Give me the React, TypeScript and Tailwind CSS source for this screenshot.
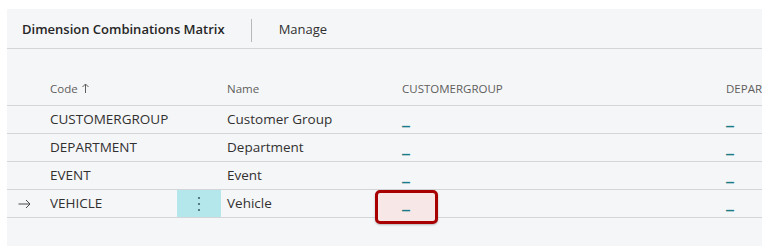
import React from "react";

const font = { fontFamily: '"Open Sans", "Noto Sans", sans-serif' };

interface Row {
  code: string;
  name: string;
  current?: boolean;
}

const rows: Row[] = [
  { code: "CUSTOMERGROUP", name: "Customer Group" },
  { code: "DEPARTMENT", name: "Department" },
  { code: "EVENT", name: "Event" },
  { code: "VEHICLE", name: "Vehicle", current: true },
];

// matrix cell value, shown as a link-coloured underscore
function Dash() {
  return (
    <span className="relative top-[-1px] font-['DejaVu_Sans',sans-serif] text-[16px] font-bold text-[#1a7c86]">
      _
    </span>
  );
}

function MenuDots() {
  return (
    <svg width="4" height="16" viewBox="0 0 4 16" className="text-[#3f6468]">
      <circle cx="2" cy="2" r="1.1" fill="currentColor" />
      <circle cx="2" cy="8" r="1.1" fill="currentColor" />
      <circle cx="2" cy="14" r="1.1" fill="currentColor" />
    </svg>
  );
}

function ArrowRight() {
  return (
    <svg width="13" height="10" viewBox="0 0 13 10" fill="none" stroke="#4a4a4a" strokeWidth="1">
      <path d="M0.5 5H12M8 1l4 4-4 4" />
    </svg>
  );
}

export default function App() {
  return (
    <div className="h-[246px] w-[762px] overflow-hidden bg-white pl-[7px] pt-[9px]" style={font}>
      <div className="h-full overflow-hidden bg-[#f5f6f8] text-[#323130]">
        {/* action bar */}
        <div className="flex h-[40px] items-center border-b border-[#d4d5d8] pt-[3px]">
          <span className="pl-[15px] text-[13px] font-semibold text-[#262626]">
            Dimension Combinations Matrix
          </span>
          <span className="ml-[26px] h-[23px] w-px bg-[#b8b8b8]" />
          <span className="ml-[27px] text-[13px] text-[#323130]">Manage</span>
        </div>

        {/* column headers */}
        <div className="flex h-[57px] items-end border-b border-[#d4d5d8] pb-[8px] text-[11.5px] text-[#605e5c] whitespace-nowrap">
          <div className="w-[43px] shrink-0" />
          <div className="flex w-[171px] shrink-0 items-center gap-[4px]">
            Code
            <svg width="7" height="10" viewBox="0 0 7 10" fill="none" stroke="#605e5c" strokeWidth="1">
              <path d="M3.5 10V1M0.5 4l3-3 3 3" />
            </svg>
          </div>
          <div className="w-[154px] shrink-0 pl-[6px]">Name</div>
          <div className="w-[324px] shrink-0 pl-[27px]">CUSTOMERGROUP</div>
          <div className="shrink-0 pl-[27px]">DEPARTMENT</div>
        </div>

        {/* rows */}
        {rows.map((r) => (
          <div key={r.code} className="flex h-[28px] items-center border-b border-[#d4d5d8] text-[13.5px] whitespace-nowrap">
            <div className="flex w-[43px] shrink-0 items-center pl-[11px]">
              {r.current && <ArrowRight />}
            </div>
            <div className="w-[127px] shrink-0">{r.code}</div>
            <div
              className={
                r.current
                  ? "flex h-full w-[44px] shrink-0 items-center justify-center bg-[#b4e7eb]"
                  : "w-[44px] shrink-0"
              }
            >
              {r.current && <MenuDots />}
            </div>
            <div className="w-[154px] shrink-0 pl-[6px]">{r.name}</div>
            <div className="relative w-[324px] shrink-0 self-stretch">
              {r.current && (
                <div className="absolute left-0 top-0 h-[34px] w-[63px] rounded-[5px] border-[3px] border-[#a80000] bg-[#f8e7e7] shadow-[0_1px_2px_rgba(0,0,0,0.25)]" />
              )}
              <div className="relative pl-[27px] pt-[2px]">
                <Dash />
              </div>
            </div>
            <div className="shrink-0 pl-[27px]">
              <Dash />
            </div>
          </div>
        ))}
      </div>
    </div>
  );
}
